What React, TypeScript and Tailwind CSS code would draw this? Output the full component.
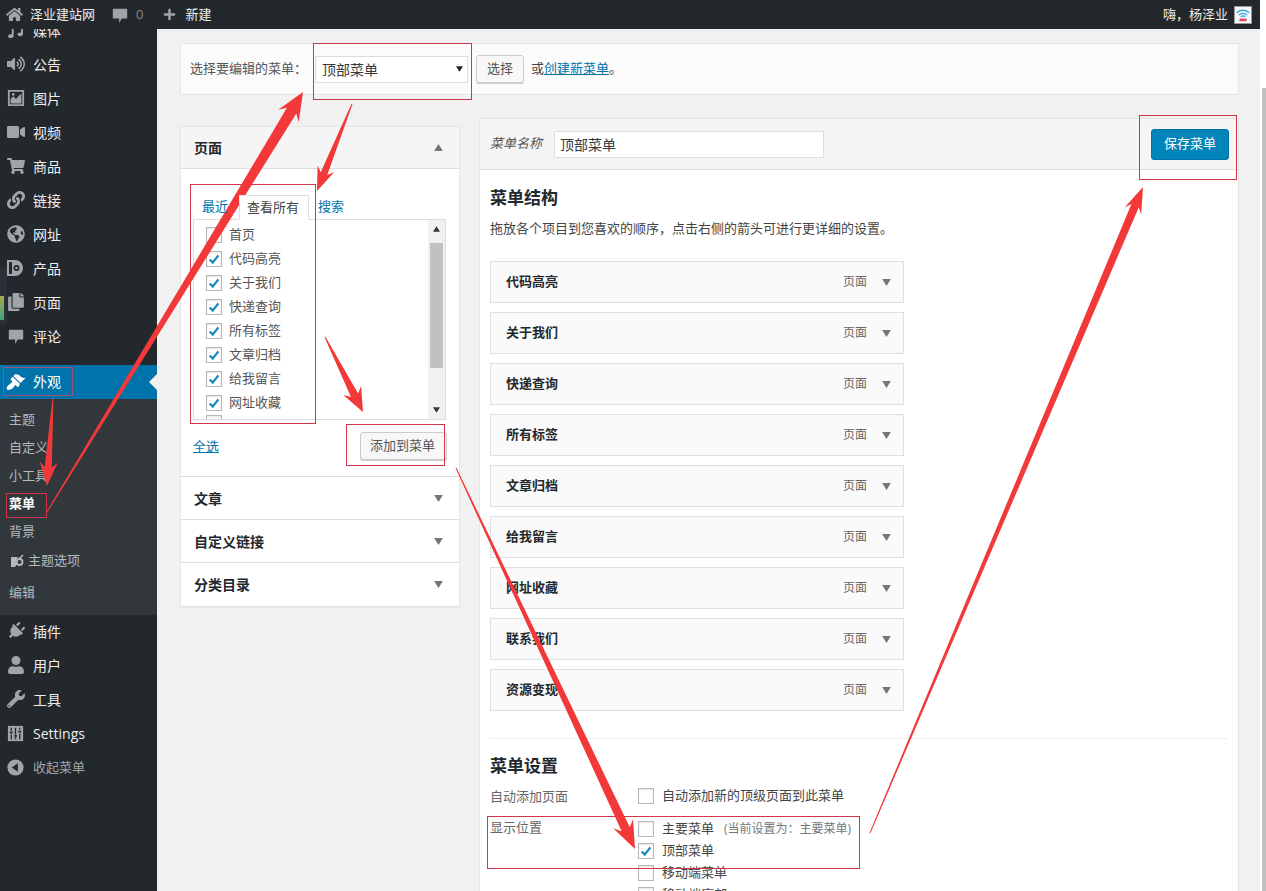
import React from "react";
import {
  FaHome, FaPlus, FaVolumeUp, FaShoppingCart, FaLink, FaGlobeAmericas,
  FaVideo, FaCopy, FaPlug, FaUser, FaWrench, FaMusic,
} from "react-icons/fa";

function CommentIcon({ className }: { className?: string }) {
  return (
    <svg viewBox="0 0 20 20" className={className} fill="currentColor">
      <path d="M3 3h14a1 1 0 0 1 1 1v9a1 1 0 0 1-1 1h-5l-3 5v-5H3a1 1 0 0 1-1-1V4a1 1 0 0 1 1-1z" />
    </svg>
  );
}

function SlidersIcon({ className }: { className?: string }) {
  return (
    <svg viewBox="0 0 20 20" className={className}>
      <rect x="2" y="2" width="16" height="16" fill="currentColor" />
      <path d="M5.500 4v3M5.500 11v5M10 4v7M10 14v2M14.500 4v2M14.500 10v6" stroke="#23282d" strokeWidth="1.400" />
      <path d="M4 8h3v2H4zM8.500 11.500h3v2h-3zM13 7h3v2h-3z" fill="#23282d" />
    </svg>
  );
}

function ImageIcon({ className }: { className?: string }) {
  return (
    <svg viewBox="0 0 20 20" className={className}>
      <path fillRule="evenodd" fill="currentColor" d="M1 1h18v18H1zM3 3v14h14V3z" />
      <path fill="currentColor" d="M4 16v-5l3-3 3 3 2-2 4-4v11z" />
      <circle cx="7" cy="6" r="1.500" fill="currentColor" />
    </svg>
  );
}

function ProductIcon({ className }: { className?: string }) {
  return (
    <svg viewBox="0 0 20 20" className={className}>
      <path fillRule="evenodd" fill="currentColor" d="M9 2a8 8 0 1 1 0 16H1V2zM10.500 7a3 3 0 1 0 0 6 3 3 0 0 0 0-6zM3 4v12h3V4z" />
      <circle cx="10.500" cy="10" r="1.300" fill="currentColor" />
    </svg>
  );
}

function BrushIcon({ className }: { className?: string }) {
  return (
    <svg viewBox="0 0 20 20" className={className} fill="currentColor">
      <path d="M14.480 11.060L7.410 3.990l1.500-1.500c.5-.56 2.300-.47 3.510.32 1.210.8 1.430 1.280 2.910 2.100 1.180.64 2.450 1.260 4.450.85zm-.71.71L6.700 4.700 4.930 6.470c-.39.39-.39 1.020 0 1.410l1.060 1.060c.39.39.39 1.030 0 1.420-.6.6-1.430 1.110-2.210 1.690-.35.26-.7.53-1.010.84C1.430 13.230 0 16.500 1.070 17.570c1.070 1.070 4.340-.36 5.180-.7.31-.31.58-.66.84-1.010.58-.78 1.090-1.610 1.690-2.210.39-.39 1.030-.39 1.420 0l1.060 1.060c.39.39 1.020.39 1.410 0z" />
    </svg>
  );
}

function CollapseIcon({ className }: { className?: string }) {
  return (
    <svg viewBox="0 0 20 20" className={className}>
      <circle cx="10" cy="10" r="8.500" fill="currentColor" />
      <path d="M12.500 5.500v9L6 10z" fill="#23282d" />
    </svg>
  );
}

function Side({ icon, label, muted }: { icon: React.ReactNode; label: string; muted?: boolean }) {
  return (
    <div className="h-[34px] flex items-center">
      <div className="w-[33px] pr-[2px] flex justify-center text-[#a0a5aa]">{icon}</div>
      <span className={muted ? "text-[13px] text-[#a0a5aa] pt-[2px]" : "text-[14px] text-[#eeeeee]"}>{label}</span>
    </div>
  );
}

function Box({ checked, className }: { checked?: boolean; className?: string }) {
  return (
    <span className={"w-4 h-4 shrink-0 border border-[#b4b9be] bg-white flex items-center justify-center shadow-[inset_0_1px_2px_rgba(0,0,0,0.1)] " + (className ?? "")}>
      {checked && (
        <svg viewBox="0 0 16 16" className="w-[14px] h-[14px]" fill="none" stroke="#1e8cbe" strokeWidth="2.600">
          <path d="M3 8.500l3.500 3.500L13 4" />
        </svg>
      )}
    </span>
  );
}

function Tri({ up, small, className }: { up?: boolean; small?: boolean; className?: string }) {
  return (
    <svg viewBox="0 0 10 8" className={(small ? "w-[7px] h-[6px] " : "w-[9px] h-[7px] ") + (className ?? "")} fill="currentColor">
      <path d={up ? "M5 0l5 8H0z" : "M5 8L0 0h10z"} />
    </svg>
  );
}

function Arrow({ x1, y1, x2, y2, tail = 1, shaft = 9, len = 26, wing = 20 }: { x1: number; y1: number; x2: number; y2: number; tail?: number; shaft?: number; len?: number; wing?: number }) {
  const dx = x2 - x1, dy = y2 - y1, d = Math.hypot(dx, dy);
  const ux = dx / d, uy = dy / d, nx = -uy, ny = ux;
  const bx = x2 - ux * len, by = y2 - uy * len;
  const nb = len * 0.78;
  const cx = x2 - ux * nb, cy = y2 - uy * nb;
  const p = [
    [x1 + nx * tail / 2, y1 + ny * tail / 2],
    [cx + nx * shaft / 2, cy + ny * shaft / 2],
    [bx + nx * wing / 2, by + ny * wing / 2],
    [x2, y2],
    [bx - nx * wing / 2, by - ny * wing / 2],
    [cx - nx * shaft / 2, cy - ny * shaft / 2],
    [x1 - nx * tail / 2, y1 - ny * tail / 2],
  ].map((a) => a.join(",")).join(" ");
  return <polygon points={p} fill="#f23838" />;
}

const pages: [string, boolean][] = [
  ["首页", false], ["代码高亮", true], ["关于我们", true], ["快递查询", true],
  ["所有标签", true], ["文章归档", true], ["给我留言", true], ["网址收藏", true],
];
const items = ["代码高亮", "关于我们", "快递查询", "所有标签", "文章归档", "给我留言", "网址收藏", "联系我们", "资源变现"];
const ic = "w-[18px] h-[18px]";

export default function App() {
  return (
    <div className="relative w-[1266px] h-[891px] overflow-hidden flex bg-[#f1f1f1] text-[13px] text-[#444444]" style={{ fontFamily: '"Open Sans","Noto Sans CJK SC",sans-serif' }}>
      <div className="w-[1260px] h-full flex flex-col">
        {/* admin bar */}
        <header className="relative z-10 h-[29px] shrink-0 bg-[#23282d] flex items-center text-[#eeeeee] text-[13px]">
          <FaHome className="w-[17px] h-[15px] ml-[6px] text-[#a0a5aa]" />
          <span className="ml-[7px]">泽业建站网</span>
          <CommentIcon className="w-[18px] h-[18px] ml-4 text-[#a0a5aa]" />
          <span className="ml-[7px] text-[#82878c]">0</span>
          <FaPlus className="w-[13px] h-[13px] ml-[20px] text-[#a0a5aa]" />
          <span className="ml-[9px]">新建</span>
          <span className="ml-auto">嗨，杨泽业</span>
          <svg viewBox="0 0 18 18" className="w-[18px] h-[18px] ml-[6px] mr-[8px] bg-[#f6f6f6] border border-[#999999]">
            <path d="M2 6.500a10 10 0 0 1 14 0M4.500 9a6.500 6.500 0 0 1 9 0M6.500 11a3.500 3.500 0 0 1 5 0" fill="none" stroke="#26a9e0" strokeWidth="1.600" />
            <rect x="5" y="13" width="8" height="3" fill="#e0455a" />
          </svg>
        </header>

        <div className="flex flex-1 min-h-0">
          {/* sidebar */}
          <aside className="w-[157px] shrink-0 bg-[#23282d]">
            <div className="-mt-[16px]">
              <Side icon={<FaMusic className="w-[15px] h-[15px]" />} label="媒体" />
              <Side icon={<FaVolumeUp className={ic} />} label="公告" />
              <Side icon={<ImageIcon className={ic} />} label="图片" />
              <Side icon={<FaVideo className={ic} />} label="视频" />
              <Side icon={<FaShoppingCart className={ic} />} label="商品" />
              <Side icon={<FaLink className={ic} />} label="链接" />
              <Side icon={<FaGlobeAmericas className={ic} />} label="网址" />
              <Side icon={<ProductIcon className="w-[20px] h-[20px]" />} label="产品" />
              <Side icon={<FaCopy className={ic} />} label="页面" />
              <Side icon={<CommentIcon className="w-[18px] h-[18px]" />} label="评论" />
            </div>
            <div className="mt-[12px] h-[34px] bg-[#0073aa] flex items-center text-white relative">
              <div className="w-[33px] pr-[2px] flex justify-center"><BrushIcon className="w-5 h-5" /></div>
              <span className="text-[14px] -mt-[2px]">外观</span>
              <span className="absolute right-0 top-[9px] w-0 h-0 border-y-[8px] border-y-transparent border-r-[8px] border-r-[#f1f1f1]" />
            </div>
            <div className="h-[216px] bg-[#32373c] text-[13px] text-[#b4b9be] pl-[9px] pt-[7px] flex flex-col">
              <div className="h-[28px] flex items-center">主题</div>
              <div className="h-[28px] flex items-center">自定义</div>
              <div className="h-[28px] flex items-center">小工具</div>
              <div className="h-[28px] flex items-center font-bold text-white">菜单</div>
              <div className="h-[28px] flex items-center">背景</div>
              <div className="h-[30px] flex items-center gap-[4px] pl-px">
                <svg viewBox="0 0 14 14" className="w-[14px] h-[14px]">
                  <path d="M1 3h7L6 6l2 2-3 5H1z" fill="#b4b9be" />
                  <circle cx="9.500" cy="8" r="3" fill="none" stroke="#b4b9be" strokeWidth="1.800" />
                  <path d="M9 5l4-4" stroke="#b4b9be" strokeWidth="1.600" />
                </svg>
                <span>主题选项</span>
              </div>
              <div className="h-[34px] flex items-center">编辑</div>
            </div>
            <div className="-mt-px">
              <Side icon={<FaPlug className={ic + " rotate-45"} />} label="插件" />
              <Side icon={<FaUser className={ic} />} label="用户" />
              <Side icon={<FaWrench className={ic} />} label="工具" />
              <Side icon={<SlidersIcon className="w-[19px] h-[19px]" />} label="Settings" />
              <Side icon={<CollapseIcon className="w-[19px] h-[19px]" />} label="收起菜单" muted />
            </div>
          </aside>

          {/* main */}
          <main className="flex-1 min-w-0 pl-[23px] pr-[21px] pt-[14px] overflow-hidden">
            <div className="h-[52px] border border-[#e5e5e5] bg-[#fbfbfb] flex items-center pl-[9px]">
              <span className="text-[#555555]">选择要编辑的菜单：</span>
              <div className="ml-[8px] w-[153px] h-[27px] bg-white border border-[#dddddd] flex items-center justify-between pl-[6px] pr-[4px] text-[14px] text-[#32373c]">
                <span>顶部菜单</span>
                <Tri small className="text-[#222222]" />
              </div>
              <button className="ml-2 w-[48px] h-[28px] bg-[#f7f7f7] border border-[#cccccc] rounded-[3px] shadow-[0_1px_0_#cccccc] text-[#555555] text-[13px]">选择</button>
              <span className="ml-[7px] text-[#444444]">或<a className="text-[#0073aa] underline">创建新菜单</a>。</span>
            </div>

            <div className="flex items-start gap-[19px] mt-[23px]">
              {/* left column */}
              <div className="w-[280px] shrink-0 mt-[8px] border border-[#e5e5e5] bg-white shadow-[0_1px_1px_rgba(0,0,0,0.04)]">
                <div className="h-[42px] bg-[#f5f5f5] border-b border-[#dddddd] flex items-center justify-between pl-[13px] pr-4">
                  <span className="font-bold text-[14px] text-[#23282d]">页面</span>
                  <Tri up className="text-[#72777c]" />
                </div>
                <div className="h-[308px] border-b border-[#dddddd] pl-3 pr-[13px] pt-[25px]">
                  <div className="flex h-[25px] items-end relative z-[1] pl-[9px] text-[#0073aa]">
                    <span className="h-[25px] flex items-center w-[37px]">最近</span>
                    <span className="h-[25px] w-[70px] -mb-px bg-white border border-[#dddddd] border-b-white flex items-center pl-[7px] text-[#444444]">查看所有</span>
                    <span className="h-[25px] flex items-center ml-[9px]">搜索</span>
                  </div>
                  <div className="h-[201px] border border-[#dddddd] flex overflow-hidden">
                    <div className="flex-1 pl-[12px] pt-[3px]">
                      {pages.map(([t, c]) => (
                        <div key={t} className="h-6 flex items-center gap-[7px] text-[#555555]"><Box checked={c} /><span>{t}</span></div>
                      ))}
                      <Box />
                    </div>
                    <div className="w-[17px] bg-[#f1f1f1] flex flex-col items-center">
                      <Tri up small className="text-[#333333] mt-[6px]" />
                      <div className="w-[13px] h-[125px] bg-[#c1c1c1] mt-[11px]" />
                      <Tri small className="text-[#333333] mt-auto mb-[6px]" />
                    </div>
                  </div>
                  <div className="flex items-center justify-between mt-[12px]">
                    <a className="text-[#0073aa] underline pt-px">全选</a>
                    <button className="w-[87px] h-[28px] pr-[2px] bg-[#f7f7f7] border border-[#cccccc] rounded-[3px] shadow-[0_1px_0_#cccccc] text-[#555555] text-[13px] -mr-px">添加到菜单</button>
                  </div>
                </div>
                {["文章", "自定义链接", "分类目录"].map((t, i) => (
                  <div key={t} className={"h-[43px] flex items-center justify-between pl-[13px] pr-4 " + (i < 2 ? "border-b border-[#dddddd]" : "")}>
                    <span className="font-bold text-[14px] text-[#23282d]">{t}</span>
                    <Tri className="text-[#72777c]" />
                  </div>
                ))}
              </div>

              {/* right column */}
              <div className="w-[760px] shrink-0 border border-[#e5e5e5] bg-white h-[900px]">
                <div className="h-[51px] bg-[#f5f5f5] border-b border-[#dddddd] flex items-center pl-[10px] pr-[9px]">
                  <em className="text-[#555555]">菜单名称</em>
                  <div className="ml-[12px] w-[270px] h-[27px] bg-white border border-[#dddddd] flex items-center pl-[5px] text-[14px] text-[#32373c]">顶部菜单</div>
                  <button className="ml-auto w-[78px] h-[31px] rounded-[3px] bg-[#0085ba] border border-[#0073aa] text-white text-[13px]">保存菜单</button>
                </div>
                <div className="px-[10px]">
                  <h3 className="text-[17px] font-bold text-[#23282d] mt-[15px] leading-[26px]">菜单结构</h3>
                  <p className="mt-[7px] text-[#444444] leading-[20px]">拖放各个项目到您喜欢的顺序，点击右侧的箭头可进行更详细的设置。</p>
                  <div className="mt-[23px] w-[414px] flex flex-col gap-[9px]">
                    {items.map((t) => (
                      <div key={t} className="h-[42px] border border-[#dfdfdf] bg-[#fafafa] flex items-center pl-[15px] pr-3">
                        <span className="font-bold text-[#23282d]">{t}</span>
                        <span className="ml-auto text-[12px] text-[#666666]">页面</span>
                        <Tri className="ml-[15px] text-[#72777c]" />
                      </div>
                    ))}
                  </div>
                  <div className="mt-[27px] border-t border-[#eeeeee]" />
                  <h3 className="text-[17px] font-bold text-[#23282d] mt-[14px] leading-[26px]">菜单设置</h3>
                  <div className="flex mt-[7px]">
                    <div className="w-[148px] text-[#666666] leading-[20px]">自动添加页面</div>
                    <div className="flex items-center gap-2 h-[20px]"><Box /><span className="text-[#444444]">自动添加新的顶级页面到此菜单</span></div>
                  </div>
                  <div className="flex mt-[11px]">
                    <div className="w-[148px] text-[#666666] leading-[20px]">显示位置</div>
                    <div className="flex flex-col gap-[6px] pt-[4px]">
                      <div className="flex items-center gap-2 h-4"><Box /><span>主要菜单</span><span className="text-[12px] text-[#72777c] ml-[2px]">(当前设置为：主要菜单)</span></div>
                      <div className="flex items-center gap-2 h-4"><Box checked /><span>顶部菜单</span></div>
                      <div className="flex items-center gap-2 h-4"><Box /><span>移动端菜单</span></div>
                      <div className="flex items-center gap-2 h-4"><Box /><span>移动端底部</span></div>
                    </div>
                  </div>
                </div>
              </div>
            </div>
          </main>
        </div>
      </div>

      {/* page scrollbar */}
      <div className="w-[6px] h-full bg-white flex flex-col pl-[2px] pt-[88px]">
        <div className="flex-1 bg-[#c1c1c1]" />
      </div>

      {/* overlay widget at left edge */}
      <div className="absolute left-0 top-[267px] w-[7px] h-[58px] bg-[#2b3038] rounded-r-[2px] flex flex-col justify-end pb-[5px]">
        <div className="h-[24px] w-[4px] bg-[linear-gradient(180deg,#a8a850,#40a080)]" />
      </div>

      {/* annotations */}
      <div className="absolute left-[313px] top-[43px] w-[159px] h-[57px] border border-[#d0364a]" />
      <div className="absolute left-[190px] top-[184px] w-[126px] h-[240px] border border-[#d0364a]" />
      <div className="absolute left-[346px] top-[424px] w-[99px] h-[42px] border border-[#d0364a]" />
      <div className="absolute left-[1139px] top-[115px] w-[98px] h-[65px] border border-[#d0364a]" />
      <div className="absolute left-[487px] top-[816px] w-[373px] h-[53px] border border-[#d0364a]" />
      <div className="absolute left-[3px] top-[367px] w-[70px] h-[29px] border border-[#a0507a]" />
      <div className="absolute left-[6px] top-[493px] w-[41px] h-[25px] border border-[#d0364a]" />
      <svg className="absolute left-0 top-0 w-[1266px] h-[891px] pointer-events-none" viewBox="0 0 1266 891">
        <Arrow x1={47} y1={512} x2={303} y2={92} tail={1} shaft={11} len={28} wing={24} />
        <Arrow x1={352} y1={104} x2={317} y2={191} tail={1} shaft={7} len={24} wing={18} />
        <Arrow x1={53} y1={398} x2={47} y2={486} tail={1} shaft={7} len={24} wing={18} />
        <Arrow x1={325} y1={337} x2={363} y2={412} tail={1} shaft={8} len={24} wing={20} />
        <Arrow x1={456} y1={468} x2={635} y2={849} tail={1} shaft={9} len={28} wing={22} />
        <Arrow x1={870} y1={833} x2={1143} y2={187} tail={1} shaft={8} len={26} wing={18} />
      </svg>
    </div>
  );
}
